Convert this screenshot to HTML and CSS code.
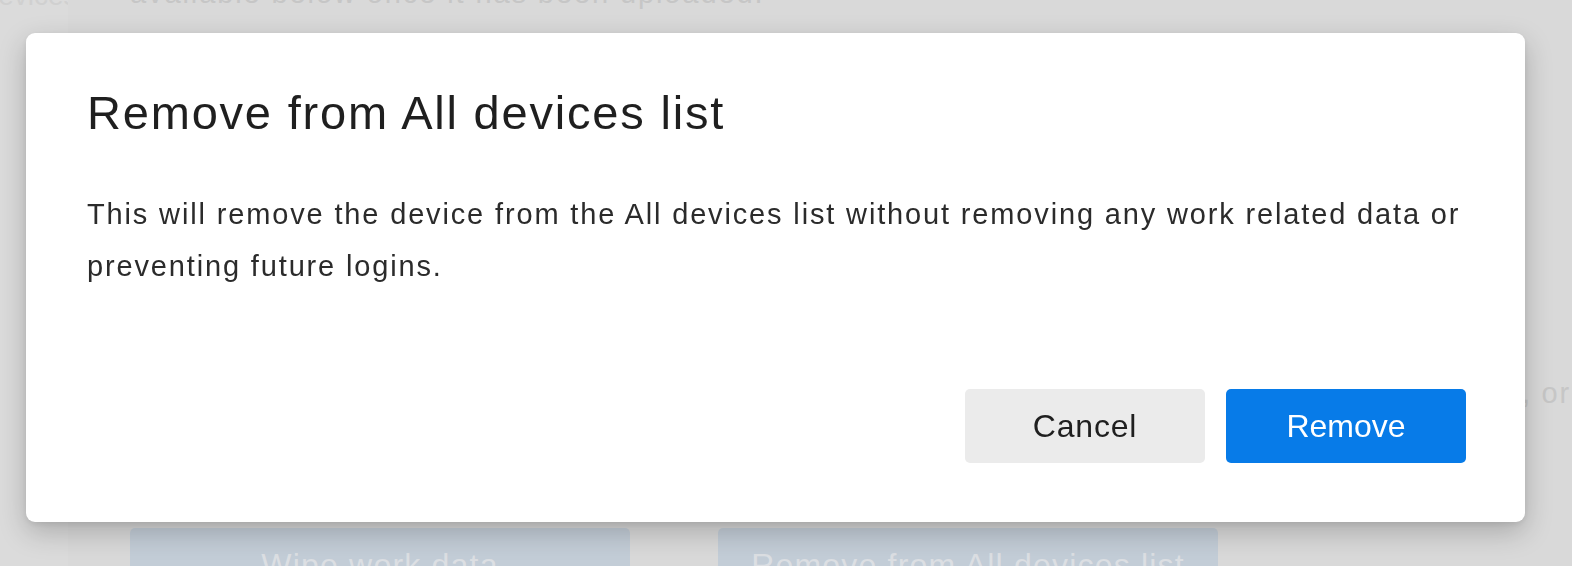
FILE: index.html
```html
<!DOCTYPE html>
<html>
<head>
<meta charset="utf-8">
<link rel="stylesheet" href="styles.css">
</head>
<body>
<div class="page">
  <aside class="sidebar"><span class="side-label">Devices</span></aside>
  <main class="main">
    <p class="intro">available below once it has been uploaded.</p>
    <p class="line-or">If this device is lost or stolen you can wipe work data from it, or</p>
    <div class="actions">
      <div class="bg-btn">Wipe work data</div>
      <div class="bg-btn">Remove from All devices list</div>
    </div>
  </main>
</div>
<div class="overlay">
  <div class="dialog" role="dialog">
    <h1 class="dialog-title">Remove from All devices list</h1>
    <p class="dialog-text">This will remove the device from the All devices list without removing any work related data or preventing future logins.</p>
    <div class="dialog-buttons">
      <button class="btn btn-cancel">Cancel</button>
      <button class="btn btn-remove">Remove</button>
    </div>
  </div>
</div>
</body>
</html>
```
FILE: styles.css
```css
html, body {
  margin: 0;
  padding: 0;
  height: 100%;
  overflow: hidden;
}
body {
  font-family: "Liberation Sans", Arial, sans-serif;
  background: #d9d9d9;
}
.page {
  display: flex;
  height: 566px;
  overflow: hidden;
}
.sidebar {
  width: 68px;
  background: #dbdbdb;
  flex: none;
  overflow: hidden;
}
.side-label {
  display: block;
  margin-top: -20px;
  margin-left: -22px;
  font-size: 28px;
  color: #d0d0d0;
}
.main {
  flex: 1;
  padding-left: 62px;
  display: flex;
  flex-direction: column;
  overflow: hidden;
}
.intro {
  margin: -24px 0 0;
  font-size: 29px;
  line-height: 34px;
  letter-spacing: 1.9px;
  color: #c6c6c6;
}
.line-or {
  margin: 366px 0 0;
  font-size: 29px;
  line-height: 34px;
  white-space: nowrap;
  text-align: right;
  padding-right: 1px;
  color: #c6c6c6;
  letter-spacing: 1.8px;
}
.actions {
  display: flex;
  gap: 88px;
  margin-top: 118px;
  flex: none;
}
.bg-btn {
  width: 500px;
  height: 64px;
  flex: none;
  background: #c3cdd7;
  border-radius: 5px;
  color: #dcdfe3;
  font-size: 32px;
  letter-spacing: 1.2px;
  text-align: center;
  line-height: 64px;
  padding-top: 5px;
  box-sizing: border-box;
}
.overlay {
  position: fixed;
  inset: 0;
  padding: 33px 40px 0 26px;
}
.dialog {
  width: 1499px;
  height: 489px;
  box-sizing: border-box;
  background: #fff;
  border-radius: 9px;
  box-shadow: 0 10px 28px rgba(0, 0, 0, 0.22), 0 2px 6px rgba(0, 0, 0, 0.08);
  padding: 52px 59px 59px 61px;
  display: flex;
  flex-direction: column;
}
.dialog-title {
  margin: 0;
  font-weight: normal;
  font-size: 47px;
  line-height: 56px;
  letter-spacing: 1.8px;
  color: #1f1f1f;
}
.dialog-text {
  margin: 47px 0 0;
  font-size: 29px;
  line-height: 52px;
  letter-spacing: 1.85px;
  color: #2b2b2b;
}
.dialog-buttons {
  margin-top: auto;
  display: flex;
  justify-content: flex-end;
  gap: 21px;
}
.btn {
  width: 240px;
  height: 74px;
  border: none;
  border-radius: 5px;
  font-family: "Liberation Sans", Arial, sans-serif;
  font-size: 32px;
  cursor: pointer;
}
.btn-cancel {
  background: #ebebeb;
  color: #1f1f1f;
  letter-spacing: 0.8px;
}
.btn-remove {
  background: #077be8;
  color: #fff;
}
```
